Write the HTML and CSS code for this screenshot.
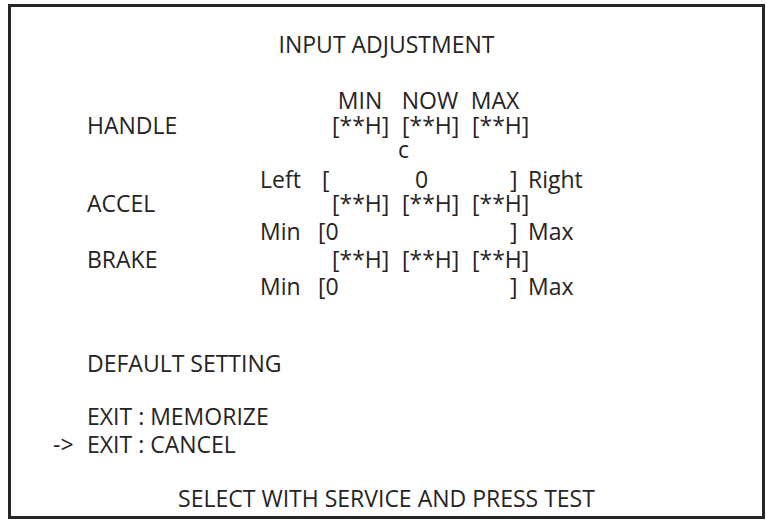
FILE: index.html
```html
<!DOCTYPE HTML>
<html>
    <head>
        <meta http-equiv="Content-Type" content="text/html; charset=UTF-8" />
        <title>Input Adjustment</title>
        <link rel="stylesheet" href="styles.css">
    </head>
    <body>
        <div class="screen">
            <div class="title">INPUT ADJUSTMENT</div>

            <div class="inputs">
                <span class="head v1">MIN</span>
                <span class="head v2">NOW</span>
                <span class="head v3">MAX</span>

                <span class="name r2">HANDLE</span>
                <span class="val v1 r2">[**H]</span>
                <span class="val v2 r2">[**H]</span>
                <span class="val v3 r2">[**H]</span>

                <span class="center-mark">c</span>

                <span class="side r4">Left</span>
                <span class="open r4 gap">[</span>
                <span class="now r4">0</span>
                <span class="close r4">]</span>
                <span class="end r4">Right</span>

                <span class="name r5">ACCEL</span>
                <span class="val v1 r5">[**H]</span>
                <span class="val v2 r5">[**H]</span>
                <span class="val v3 r5">[**H]</span>

                <span class="side r6">Min</span>
                <span class="open r6">[0</span>
                <span class="close r6">]</span>
                <span class="end r6">Max</span>

                <span class="name r7">BRAKE</span>
                <span class="val v1 r7">[**H]</span>
                <span class="val v2 r7">[**H]</span>
                <span class="val v3 r7">[**H]</span>

                <span class="side r8">Min</span>
                <span class="open r8">[0</span>
                <span class="close r8">]</span>
                <span class="end r8">Max</span>
            </div>

            <div class="menu">
                <div class="item default">DEFAULT SETTING</div>
                <div class="item memorize">EXIT : MEMORIZE</div>
                <div class="item cancel"><span class="cursor">-&gt;</span>EXIT : CANCEL</div>
            </div>

            <div class="hint">SELECT WITH SERVICE AND PRESS TEST</div>
        </div>
    </body>
</html>
```

FILE: styles.css
```css
body {
    margin: 0;
    background: #fff;
    color: #262324;
    font-family: "Open Sans", "Noto Sans", sans-serif;
    font-size: 23px;
    line-height: 22px;
}

.screen {
    box-sizing: border-box;
    width: 757px;
    height: 515px;
    margin: 4px 0 0 8px;
    border: 3px solid #262626;
    padding-top: 26px;
    display: flex;
    flex-direction: column;
}

.title,
.hint {
    text-align: center;
}

/* grid of the three inputs */
.inputs {
    margin-top: 34px;
    padding-left: 76px;
    display: grid;
    grid-template-columns: 173px 58px 14px 70px 70px 36px 20px auto;
    grid-template-rows: 25px 22px 32px 24px 28px 28px 27px 22px;
    white-space: nowrap;
}

.head {
    grid-row: 1;
    width: 56px;
    display: flex;
    justify-content: center;
}
.head.v3 { margin-left: -5px; }

.name { grid-column: 1; }
.v1 { grid-column: 4; }
.v2 { grid-column: 5; }
.v3 { grid-column: 6; }

.center-mark {
    grid-row: 3;
    grid-column: 5;
    margin-left: -4px;
    padding-top: 2px;
}

.side { grid-column: 2; }
.open { grid-column: 3; }
.open.gap { padding-left: 4px; }
.now {
    grid-column: 5;
    padding-left: 13px;
}
.close {
    grid-column: 7;
    padding-left: 2px;
}
.end { grid-column: 8; }

.r2 { grid-row: 2; }
.r4 { grid-row: 4; }
.r5 { grid-row: 5; }
.r6 { grid-row: 6; }
.r7 { grid-row: 7; }
.r8 { grid-row: 8; }

.menu {
    padding-left: 76px;
}

.default { margin-top: 55px; }
.memorize { margin-top: 31px; }
.cancel { margin-top: 6px; }

.cursor {
    display: inline-block;
    width: 34px;
    margin-left: -34px;
}

.hint {
    margin-top: 32px;
}
```
